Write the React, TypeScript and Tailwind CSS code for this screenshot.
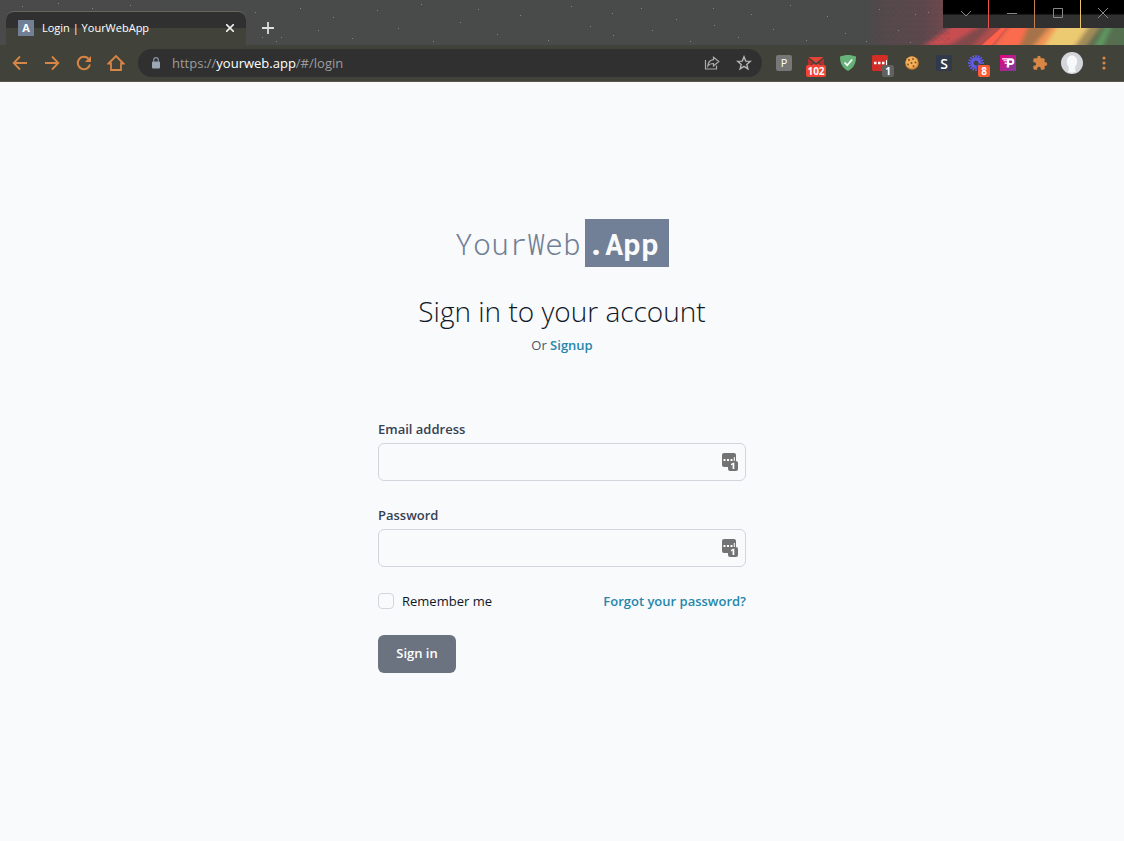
import type { ReactNode } from 'react';

const iconButton = 'flex h-8 w-8 shrink-0 items-center justify-center';

function ToolButton({ label, children }: { label: string; children: ReactNode }) {
  return (
    <button type="button" aria-label={label} className={`${iconButton} text-[#d88645]`}>
      {children}
    </button>
  );
}

function Extension({ label, children, badge, badgeClass = '' }: { label: string; children: ReactNode; badge?: string; badgeClass?: string }) {
  return (
    <button type="button" aria-label={label} className={`${iconButton} relative`}>
      {children}
      {badge && (
        <span className={`absolute flex h-3 items-center justify-center rounded-xs text-[10px] leading-3 font-bold text-white ${badgeClass}`}>
          {badge}
        </span>
      )}
    </button>
  );
}

function ThemeArt() {
  const stars = [
    [22, 6], [58, 3], [92, 8], [130, 5], [255, 12], [262, 37], [276, 41], [281, 37], [300, 8], [318, 30], [333, 17], [352, 38], [377, 10],
    [398, 28], [421, 4], [433, 41], [460, 22], [478, 9], [497, 34], [520, 15], [548, 40], [571, 6], [590, 26], [612, 13], [613, 35], [641, 8],
    [652, 30], [676, 19], [690, 41], [713, 8], [714, 25], [738, 37], [751, 14], [773, 29], [790, 5], [806, 40], [827, 16], [845, 33], [866, 41],
    [879, 9], [898, 30], [915, 14], [928, 12], [910, 42],
  ];
  return (
    <svg className="absolute inset-0 h-full w-full" viewBox="0 0 1124 45" preserveAspectRatio="xMaxYMid slice" aria-hidden="true">
      <defs>
        <linearGradient id="sky" gradientUnits="userSpaceOnUse" x1="0" x2="1124" y1="0" y2="0">
          <stop offset="0" stopColor="#4a4a4b" />
          <stop offset="0.77" stopColor="#494a4a" />
          <stop offset="0.79" stopColor="#56494c" />
          <stop offset="0.82" stopColor="#5c484c" />
          <stop offset="0.85" stopColor="#7c494f" />
          <stop offset="1" stopColor="#53704f" />
        </linearGradient>
        <pattern id="mesh" width="6" height="6" patternUnits="userSpaceOnUse">
          <path d="M0 3 3 1 6 3 3 5Z" fill="none" stroke="#463c40" strokeWidth="0.7" opacity="0.25" />
        </pattern>
        <filter id="soft" x="-20%" y="-20%" width="140%" height="140%">
          <feGaussianBlur stdDeviation="2" />
        </filter>
      </defs>
      <rect width="1124" height="45" fill="url(#sky)" />
      <g filter="url(#soft)">
        <path d="M918 50 958 22H986L942 50Z" fill="#c84d51" />
        <path d="M942 50 986 22H1002L968 50Z" fill="#804a4c" />
        <path d="M968 50 996 22H1020L992 50Z" fill="#b04d4c" />
        <path d="M990 50 1012 22H1032L1020 50Z" fill="#fa6c4d" />
        <path d="M1018 50 1030 22H1056L1032 50Z" fill="#a57248" />
        <path d="M1030 50 1054 22H1064L1042 50Z" fill="#f09455" />
        <path d="M1042 50 1060 22H1094L1072 50Z" fill="#ebca72" />
        <path d="M1072 50 1092 22H1104L1084 50Z" fill="#a08b58" />
        <path d="M1092 50 1108 22H1114L1101 50Z" fill="#5f9a60" />
      </g>
      <path d="M982 45 1001 28H1006L992 45Z" fill="#ff6049" />
      <rect x="875" width="75" height="45" fill="url(#mesh)" />
      {stars.map(([x, y]) => (
        <rect key={`${x}-${y}`} x={x} y={y} width="1" height="1" fill="#85858a" />
      ))}
    </svg>
  );
}

const controlFace = 'flex h-7 items-center justify-center bg-linear-to-b from-black from-45% to-[#303030] to-55% pb-[2px]';

function WindowControls() {
  return (
    <div className="flex h-7 gap-px bg-linear-to-r from-[#ef5350] from-40% via-[#c08050] to-[#e9c46a] to-70%">
      <button type="button" aria-label="Search tabs" className={`${controlFace} w-[45px]`}>
        <svg width="12" height="12" viewBox="0 0 12 12" fill="none" stroke="#888"><path d="m1 4 5 5 5-5" /></svg>
      </button>
      <button type="button" aria-label="Minimize" className={`${controlFace} w-[45px]`}>
        <svg width="10" height="10" viewBox="0 0 10 10" stroke="#888"><path d="M0 5.500H10" /></svg>
      </button>
      <button type="button" aria-label="Maximize" className={`${controlFace} w-[45px]`}>
        <svg width="10" height="10" viewBox="0 0 10 10" fill="none" stroke="#888"><path d="M.5.5h9v9h-9Z" /></svg>
      </button>
      <button type="button" aria-label="Close" className={`${controlFace} w-[43px]`}>
        <svg width="10" height="10" viewBox="0 0 10 10" stroke="#888"><path d="m0 0 10 10M10 0 0 10" /></svg>
      </button>
    </div>
  );
}

function TabStrip() {
  return (
    <header className="relative flex h-[45px] justify-between bg-[#4a4a4b]">
      <ThemeArt />
      <div className="relative flex items-end pl-[6px]">
        <div className="flex h-[34px] w-60 items-center rounded-t-lg border-t border-[#66675f] bg-linear-to-b from-[#303030] from-50% to-[#41423a] to-50% px-3 pb-px">
          <span className="flex h-4 w-4 items-center justify-center bg-[#718096] text-[11px] font-bold text-white">A</span>
          <span className="ml-2 flex-1 text-[11px] text-white">Login | YourWebApp</span>
          <button type="button" aria-label="Close tab" className="-mr-1 flex h-4 w-4 items-center justify-center">
            <svg width="8" height="8" viewBox="0 0 8 8" stroke="#eee" strokeWidth="1.600"><path d="m0 0 8 8M8 0 0 8" /></svg>
          </button>
        </div>
        <button type="button" aria-label="New tab" className="flex h-[34px] w-11 items-center justify-center">
          <svg width="12" height="12" viewBox="0 0 12 12" stroke="#ddd" strokeWidth="1.800"><path d="M6 0v12M0 6h12" /></svg>
        </button>
      </div>
      <div className="relative">
        <WindowControls />
      </div>
    </header>
  );
}

function Toolbar() {
  return (
    <nav aria-label="Browser toolbar" className="flex h-[37px] items-center gap-[6px] border-b border-[#5c564d] bg-[#41423a] px-1">
      <div className="flex">
        <ToolButton label="Back">
          <svg width="16" height="16" viewBox="0 0 16 16" fill="none" stroke="currentColor" strokeWidth="1.800"><path d="M15 8H2M8 1.500 1.700 8 8 14.500" /></svg>
        </ToolButton>
        <ToolButton label="Forward">
          <svg width="16" height="16" viewBox="0 0 16 16" fill="none" stroke="currentColor" strokeWidth="1.800"><path d="M1 8h13M8 1.500 14.300 8 8 14.500" /></svg>
        </ToolButton>
        <ToolButton label="Reload">
          <svg width="16" height="16" viewBox="0 0 16 16" fill="none" stroke="currentColor" strokeWidth="2"><path d="M14 9.500A6.200 6.200 0 1 1 12.500 3.700" /><path d="M15 1v6H9Z" fill="currentColor" stroke="none" /></svg>
        </ToolButton>
        <ToolButton label="Home">
          <svg width="18" height="18" viewBox="0 0 18 18" fill="none" stroke="currentColor" strokeWidth="1.800"><path d="M1.500 9.500 9 2l7.500 7.500H14V16H4V9.500Z" /></svg>
        </ToolButton>
      </div>
      <div className="flex h-7 min-w-0 flex-1 items-center rounded-full bg-[#303030] pr-[2px] pl-3">
        <svg className="shrink-0" width="12" height="12" viewBox="0 0 12 12" fill="none"><rect x="2" y="4.500" width="8" height="7" rx="1" fill="#9ba7b5" /><path d="M3.700 5V3a2.300 2.300 0 0 1 4.600 0v2" stroke="#8793a1" strokeWidth="1.200" /></svg>
        <div className="ml-[10px] min-w-0 flex-1 truncate pt-px text-[13px] text-[#9d9d9d]">
          https://<span className="text-white">yourweb.app</span>/#/login
        </div>
        <button type="button" aria-label="Share this page" className={iconButton}>
          <svg width="16" height="16" viewBox="0 0 16 16" fill="none" stroke="#aaa" strokeWidth="1.200"><path d="M1.500 5v9h11v-3.500" /><path d="M9.500 2.200 14.800 6.500 9.500 11V8.500C6.800 8.500 5 9.300 3.800 11c.3-3.500 2.200-5.900 5.700-6.300Z" /></svg>
        </button>
        <button type="button" aria-label="Bookmark this tab" className={iconButton}>
          <svg width="16" height="16" viewBox="0 0 16 16" fill="none" stroke="#b5b5b5" strokeWidth="1.400"><path d="m8 1.800 1.700 4.300 4.600.3-3.500 3 1.100 4.500L8 11.400l-3.900 2.500 1.100-4.500-3.500-3 4.600-.3Z" /></svg>
        </button>
      </div>
      <div className="flex">
        <Extension label="P extension">
          <span className="flex h-4 w-4 items-center justify-center rounded-xs bg-[#777] text-[11px] text-white">P</span>
        </Extension>
        <Extension label="Mail checker" badge="102" badgeClass="top-[18px] left-[6px] w-5 bg-[#f44336]">
          <svg width="16" height="12" viewBox="0 0 16 12" fill="#e0443a"><path d="M.5 0h15L8 6Z" /><path d="M0 1.200 5 5.500 0 10ZM16 1.200 11 5.500 16 10Z" fill="#b5322c" /><path d="M0 12v-.7L5.800 6.200 8 8l2.200-1.800 5.800 5.100v.7Z" /></svg>
        </Extension>
        <Extension label="Ad blocker">
          <svg width="16" height="16" viewBox="0 0 16 16"><path d="M8 0c2.600 0 5.600.6 8 1.600 0 6-1.300 10.700-8 14.400C1.300 12.300 0 7.600 0 1.600 2.400.6 5.400 0 8 0Z" fill="#67b279" /><path d="m4.500 7.500 2.700 2.700 5-5.700" fill="none" stroke="#fff" strokeWidth="1.700" /></svg>
        </Extension>
        <Extension label="Password manager" badge="1" badgeClass="top-[18px] left-[18px] w-3 bg-[#606160]">
          <svg width="16" height="16" viewBox="0 0 16 16"><rect width="16" height="16" rx="1.500" fill="#d32d27" /><path d="M2 6.700h2.500v2.500H2ZM6 6.700h2.500v2.500H6ZM10 6.700h2.500v2.500H10ZM14 5h1v5h-1Z" fill="#fff" /></svg>
        </Extension>
        <Extension label="Cookies">
          <svg width="14" height="14" viewBox="0 0 14 14"><circle cx="7" cy="7" r="6.800" fill="#cf8236" /><circle cx="6.600" cy="6.300" r="5.900" fill="#f0b05a" /><g fill="#8a4a22"><circle cx="4" cy="4" r="1" /><circle cx="8" cy="3" r="0.900" /><circle cx="10.500" cy="6.500" r="1" /><circle cx="6.500" cy="7" r="0.900" /><circle cx="3" cy="8.500" r="0.900" /><circle cx="8.500" cy="10.300" r="1" /></g></svg>
        </Extension>
        <Extension label="S extension">
          <span className="flex h-4 w-4 items-center justify-center bg-[#303a4b] text-[14px] font-semibold text-white">S</span>
        </Extension>
        <Extension label="Loom" badge="8" badgeClass="top-[18px] left-[18px] w-3 bg-[#ff5a37]">
          <svg width="16" height="16" viewBox="0 0 16 16" fill="none" stroke="#625df5" strokeWidth="1.500"><path d="M8 0v5.500M8 10.500V16M0 8h5.500M10.500 8H16M2.300 2.300l3.900 3.900M9.800 9.800l3.900 3.900M13.700 2.300 9.800 6.200M6.200 9.800l-3.900 3.900M4.900.6l2.100 5M11.100.6 9 5.700M.6 4.900l5.100 2.100M.6 11.100 5.700 9M15.400 4.900 10.300 7M4.900 15.400 7 10.300" /></svg>
        </Extension>
        <Extension label="Perfect pixel">
          <svg width="16" height="16" viewBox="0 0 16 16"><defs><linearGradient id="pp" x2="1" y2="1"><stop stopColor="#e9007f" /><stop offset="1" stopColor="#7b419b" /></linearGradient></defs><path d="M0 0h16v16H0Z" fill="url(#pp)" /><path d="M2 3.200h9a3.200 3.200 0 0 1 0 6.800H9.200v2.500H6.700V10l.5-1.300H4.600V7.500H7V6.300H3.500V5.200h3.700v-.7H2ZM9.200 5.500V8H11a1.200 1.200 0 0 0 0-2.500Z" fill="#fff" fillRule="evenodd" /></svg>
        </Extension>
        <Extension label="Extensions">
          <svg width="16" height="16" viewBox="0 0 24 24" fill="#d88645"><path d="M20.500 11H19V7a2 2 0 0 0-2-2h-4V3.500a2.500 2.500 0 0 0-5 0V5H4a2 2 0 0 0-2 2v3.800h1.500a2.700 2.700 0 0 1 0 5.400H2V20a2 2 0 0 0 2 2h3.800v-1.500a2.700 2.700 0 0 1 5.400 0V22H17a2 2 0 0 0 2-2v-4h1.500a2.500 2.500 0 0 0 0-5Z" /></svg>
        </Extension>
        <Extension label="Profile">
          <svg width="22" height="22" viewBox="0 0 22 22"><circle cx="11" cy="11" r="11" fill="#d3d6da" /><path d="M7 20c1-2 1-3.500.3-5.500C6 12.500 5.500 10.500 6 8c.6-3 2.500-4.500 5-4.500S15.500 5 16 8c.3 2.500-.3 4.800-1.500 6.300-.7 1.500-.4 3.300.4 5.200-2.500 1.500-5.600 1.600-7.900.5Z" fill="#f7f8f9" /></svg>
        </Extension>
        <Extension label="Menu">
          <svg width="4" height="14" viewBox="0 0 4 14" fill="#d88645"><circle cx="2" cy="2" r="1.600" /><circle cx="2" cy="7" r="1.600" /><circle cx="2" cy="12" r="1.600" /></svg>
        </Extension>
      </div>
    </nav>
  );
}

function Field({ id, label, type }: { id: string; label: string; type: string }) {
  return (
    <div>
      <label htmlFor={id} className="block text-[13px] leading-5 font-semibold text-gray-700">{label}</label>
      <div className="relative mt-1">
        <input id={id} type={type} className="block h-[38px] w-full rounded-md border border-gray-300 bg-transparent pr-9 pl-3 text-sm outline-none" />
        <svg className="absolute top-[10px] right-[7px]" width="18" height="18" viewBox="0 0 18 18" aria-hidden="true">
          <rect x="1" width="14" height="14" rx="2" fill="#737373" />
          <path d="M2.500 6h2v2h-2ZM6 6h2v2H6ZM9.500 6h2v2h-2ZM12.800 4h1v5h-1Z" fill="#fff" />
          <rect x="7" y="8" width="10" height="10" rx="2" fill="#737373" />
          <path d="m10 11 2-1.200h1.300V16h-1.700v-4.400l-1.600.8Z" fill="#fff" />
        </svg>
      </div>
    </div>
  );
}

export default function App() {
  return (
    <div className="flex min-h-screen flex-col bg-[#f9fafc] font-['Open_Sans',sans-serif]">
      <TabStrip />
      <Toolbar />
      <main className="flex flex-1 flex-col items-center px-4 pt-[137px] pb-12">
        <div className="flex h-12 items-center gap-1 font-['Roboto_Mono','Liberation_Mono',monospace] text-[30px] text-[#718096]">
          <span className="font-light">YourWeb</span>
          <span className="flex h-12 items-center bg-[#718096] pr-[10px] pl-[2px] font-bold text-[#f9fafc]">.App</span>
        </div>
        <h1 className="mt-6 text-center text-[28px] leading-10 font-light text-gray-900">Sign in to your account</h1>
        <p className="mt-1 text-center text-[13px] leading-5 text-gray-600">
          Or <a href="#signup" className="font-semibold text-[#2587ab]">Signup</a>
        </p>
        <form className="mt-16 flex w-full max-w-[368px] flex-col gap-6" onSubmit={(event) => event.preventDefault()}>
          <Field id="email" label="Email address" type="email" />
          <Field id="password" label="Password" type="password" />
          <div className="flex items-center justify-between text-[13px] leading-5">
            <label className="flex items-center gap-2 text-gray-900">
              <input type="checkbox" className="h-4 w-4 appearance-none rounded border border-gray-300 checked:bg-gray-500" />
              Remember me
            </label>
            <a href="#forgot" className="font-semibold text-[#2587ab]">Forgot your password?</a>
          </div>
          <button type="submit" className="h-[38px] w-[78px] rounded-md bg-[#6b7280] text-[13px] font-semibold text-white">Sign in</button>
        </form>
      </main>
    </div>
  );
}
